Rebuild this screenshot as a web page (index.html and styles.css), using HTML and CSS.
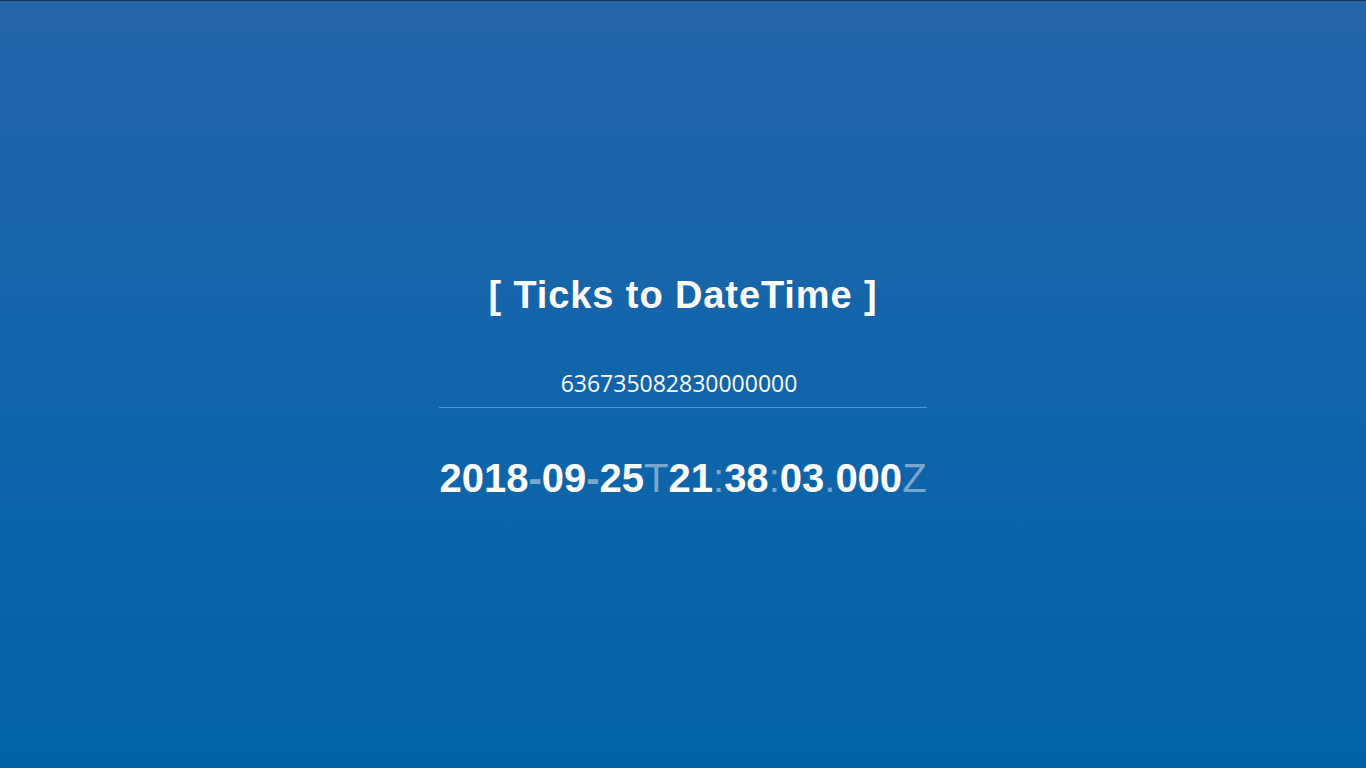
FILE: index.html
```html
<!DOCTYPE html>
<html lang="en">
<head>
<meta charset="utf-8">
<title>Ticks to DateTime</title>
<link rel="stylesheet" href="styles.css">
</head>
<body>
<main class="page">
  <h1 class="title">[ Ticks to DateTime ]</h1>
  <input class="ticks" type="text" value="636735082830000000">
  <div class="result"><span class="num">2018</span><span class="dash">-</span><span class="num">09</span><span class="dash">-</span><span class="num">25</span><span class="sep">T</span><span class="num">21</span><span class="sep">:</span><span class="num">38</span><span class="sep">:</span><span class="num">03</span><span class="sep">.</span><span class="num">000</span><span class="sep">Z</span></div>
</main>
</body>
</html>
```
FILE: styles.css
```css
html, body {
  margin: 0;
  padding: 0;
  height: 100%;
}
body {
  box-sizing: border-box;
  border-top: 1px solid #1b3357;
  background: linear-gradient(to bottom, #2466aa 0%, #0063a9 100%);
  color: #ffffff;
  font-family: "Liberation Sans", Arial, sans-serif;
  overflow: hidden;
}
.page {
  display: flex;
  flex-direction: column;
  align-items: center;
  padding-top: 273px;
}
.title {
  margin: 0;
  font-size: 38px;
  font-weight: bold;
  letter-spacing: 0.9px;
  line-height: normal;
}
.ticks {
  margin-top: 51px;
  width: 480px;
  height: 30px;
  box-sizing: content-box;
  padding: 0 8px 9px 0;
  border: none;
  border-bottom: 1px solid rgba(255, 255, 255, 0.3);
  background: transparent;
  color: #ffffff;
  text-align: center;
  font-family: "Open Sans", "Noto Sans", sans-serif;
  font-size: 23px;
  outline: none;
}
.result {
  margin-top: 48px;
  font-size: 40px;
  font-weight: bold;
  line-height: normal;
  white-space: nowrap;
}
.dash {
  color: rgba(255, 255, 255, 0.45);
}
.sep {
  color: rgba(255, 255, 255, 0.45);
  font-weight: normal;
}
```
